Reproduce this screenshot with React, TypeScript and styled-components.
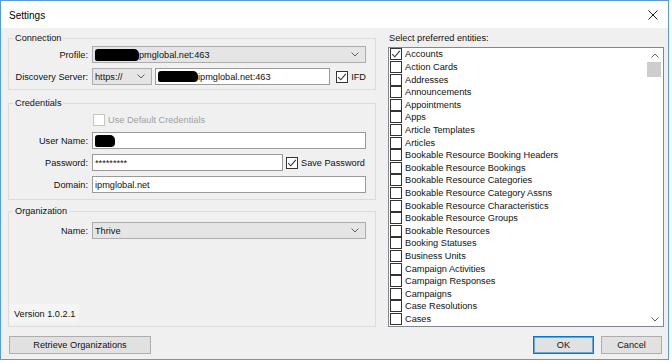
import React from "react";
import styled, { createGlobalStyle } from "styled-components";

const Global = createGlobalStyle`
  html, body { margin: 0; padding: 0; background: #ffffff; }
  body { font-family: "Liberation Sans", Arial, sans-serif; font-size: 9.2px; color: #111; }
  * { box-sizing: border-box; }
`;

const Window = styled.div`
  width: 669px;
  height: 360px;
  border: 1px solid #5b9ad8;
  display: flex;
  flex-direction: column;
  background: #f0f0f0;
`;

const TitleBar = styled.div`
  height: 27px;
  background: #ffffff;
  display: flex;
  align-items: center;
  padding: 0 0 0 8px;
  font-size: 10px;
  color: #000;
`;

const Title = styled.span`
  flex: 1;
  padding-top: 1px;
`;

const CloseBtn = styled.div`
  width: 24px;
  height: 27px;
  margin-right: 3px;
  display: flex;
  align-items: center;
  justify-content: center;
`;

const Client = styled.div`
  flex: 1;
  display: flex;
  gap: 12px;
  padding: 4px 4px 5px 7px;
  min-height: 0;
`;

const LeftCol = styled.div`
  width: 368px;
  display: flex;
  flex-direction: column;
`;

const RightCol = styled.div`
  flex: 1;
  display: flex;
  flex-direction: column;
  min-width: 0;
`;

const Group = styled.fieldset<{ $top?: number; $grow?: boolean; $pt?: number; $pb?: number }>`
  margin: ${(p) => p.$top ?? 0}px 0 0 0;
  padding: ${(p) => p.$pt ?? 2}px 9px ${(p) => p.$pb ?? 4}px 0;
  border: 1px solid #dcdcdc;
  min-width: 0;
  display: flex;
  flex-direction: column;
  gap: 5px;
  ${(p) => (p.$grow ? "flex: 1;" : "")}
`;

const Legend = styled.legend`
  margin-left: 4px;
  padding: 0 2px;
  line-height: 12px;
  height: 12px;
  font-size: 9.2px;
`;

const Row = styled.div<{ $h?: number }>`
  display: grid;
  grid-template-columns: 79px 1fr;
  column-gap: 4px;
  align-items: center;
  height: ${(p) => p.$h ?? 17}px;
`;

const Label = styled.span`
  text-align: right;
  white-space: nowrap;
`;

const Controls = styled.div`
  display: flex;
  align-items: center;
  min-width: 0;
  height: 100%;
`;

const Combo = styled.div<{ $w?: number }>`
  ${(p) => (p.$w ? `width: ${p.$w}px;` : "flex: 1;")}
  height: 17px;
  background: #e5e5e5;
  border: 1px solid #adadad;
  display: flex;
  align-items: center;
  padding: 0 6px 0 2px;
  white-space: nowrap;
`;

const ComboText = styled.span`
  flex: 1;
  display: flex;
  align-items: center;
`;

const TextBox = styled.div<{ $w?: number }>`
  ${(p) => (p.$w ? `width: ${p.$w}px;` : "flex: 1;")}
  height: 17px;
  background: #ffffff;
  border: 1px solid #9a9a9a;
  display: flex;
  align-items: center;
  padding: 0 2px;
  white-space: nowrap;
  min-width: 0;
`;

const Redact = styled.span<{ $w: number; $h?: number }>`
  display: inline-block;
  width: ${(p) => p.$w}px;
  height: ${(p) => p.$h ?? 11}px;
  background: #000;
  border-radius: 3px 5px 4px 2px;
`;

const CheckWrap = styled.label<{ $ml?: number; $disabled?: boolean }>`
  display: flex;
  align-items: center;
  gap: 3px;
  margin-left: ${(p) => p.$ml ?? 0}px;
  color: ${(p) => (p.$disabled ? "#a0a0a0" : "#111")};
  white-space: nowrap;
`;

const Box = styled.span<{ $disabled?: boolean }>`
  width: 12px;
  height: 12px;
  flex: none;
  border: 1px solid ${(p) => (p.$disabled ? "#c8c8c8" : "#333333")};
  background: #ffffff;
  display: flex;
  align-items: center;
  justify-content: center;
`;

const Version = styled.div`
  margin-top: auto;
  margin-left: 1px;
  margin-bottom: -1px;
  padding: 4px 4px 3px 4px;
  align-self: flex-start;
  background: #f5f5f5;
  line-height: 12px;
`;

const Button = styled.div<{ $w: number; $default?: boolean }>`
  width: ${(p) => p.$w}px;
  height: 18px;
  background: #e1e1e1;
  border: 1px solid ${(p) => (p.$default ? "#0078d7" : "#adadad")};
  ${(p) => (p.$default ? "box-shadow: inset 0 0 0 1px rgba(0,120,215,0.55);" : "")}
  display: flex;
  align-items: center;
  justify-content: center;
  flex: none;
`;

const LeftButtonRow = styled.div`
  margin-top: 9px;
  padding-left: 1px;
  display: flex;
`;

const ListLabel = styled.div`
  line-height: 12px;
  height: 12px;
  padding-left: 1px;
`;

const ListBox = styled.div`
  margin-top: 3px;
  flex: 1;
  border: 1px solid #828790;
  background: #ffffff;
  display: flex;
  min-height: 0;
`;

const Items = styled.div`
  flex: 1;
  padding-left: 1px;
  overflow: hidden;
`;

const Item = styled.div`
  height: 12.62px;
  display: flex;
  align-items: center;
  gap: 3px;
  white-space: nowrap;
`;

const ScrollBar = styled.div`
  width: 17px;
  display: flex;
  flex-direction: column;
  align-items: center;
  background: #ffffff;
`;

const ScrollArrow = styled.div`
  height: 14px;
  width: 100%;
  display: flex;
  align-items: center;
  justify-content: center;
`;

const Track = styled.div`
  flex: 1;
  width: 100%;
  padding: 0 2px 0 1px;
`;

const Thumb = styled.div`
  height: 15px;
  background: #cdcdcd;
`;

const ButtonRow = styled.div`
  margin-top: 9px;
  display: flex;
  justify-content: flex-end;
  gap: 7px;
  padding-right: 2px;
`;

const Check = () => (
  <svg width="10" height="10" viewBox="0 0 10 10">
    <path d="M1.2 5.2 L3.8 7.8 L8.8 1.8" fill="none" stroke="#333" strokeWidth="1.1" />
  </svg>
);

const Chevron = ({ up }: { up?: boolean }) => (
  <svg width="8" height="5" viewBox="0 0 8 5">
    <path d={up ? "M0.5 4.5 L4 1 L7.5 4.5" : "M0.5 0.5 L4 4 L7.5 0.5"} fill="none" stroke="#606060" strokeWidth="1" />
  </svg>
);

const CheckBox = ({ checked, disabled }: { checked?: boolean; disabled?: boolean }) => (
  <Box $disabled={disabled}>{checked ? <Check /> : null}</Box>
);

const entities = [
  "Accounts",
  "Action Cards",
  "Addresses",
  "Announcements",
  "Appointments",
  "Apps",
  "Article Templates",
  "Articles",
  "Bookable Resource Booking Headers",
  "Bookable Resource Bookings",
  "Bookable Resource Categories",
  "Bookable Resource Category Assns",
  "Bookable Resource Characteristics",
  "Bookable Resource Groups",
  "Bookable Resources",
  "Booking Statuses",
  "Business Units",
  "Campaign Activities",
  "Campaign Responses",
  "Campaigns",
  "Case Resolutions",
  "Cases",
];

export default function App() {
  return (
    <>
      <Global />
      <Window>
        <TitleBar>
          <Title>Settings</Title>
          <CloseBtn>
            <svg width="10" height="10" viewBox="0 0 10 10">
              <path d="M0.5 0.5 L9.5 9.5 M9.5 0.5 L0.5 9.5" stroke="#222" strokeWidth="1" />
            </svg>
          </CloseBtn>
        </TitleBar>
        <Client>
          <LeftCol>
            <Group>
              <Legend>Connection</Legend>
              <Row>
                <Label>Profile:</Label>
                <Controls>
                  <Combo>
                    <ComboText>
                      <Redact $w={44} $h={12} />
                      pmglobal.net:463
                    </ComboText>
                    <Chevron />
                  </Combo>
                </Controls>
              </Row>
              <Row>
                <Label>Discovery Server:</Label>
                <Controls>
                  <Combo $w={60}>
                    <ComboText>https://</ComboText>
                    <Chevron />
                  </Combo>
                  <TextBox style={{ marginLeft: 3 }}>
                    <Redact $w={40} />
                    ipmglobal.net:463
                  </TextBox>
                  <CheckWrap $ml={6}>
                    <CheckBox checked />
                    IFD
                  </CheckWrap>
                </Controls>
              </Row>
            </Group>
            <Group $top={7} $pt={4} $pb={6}>
              <Legend>Credentials</Legend>
              <Row $h={14}>
                <span />
                <Controls>
                  <CheckWrap $ml={1} $disabled>
                    <CheckBox disabled />
                    Use Default Credentials
                  </CheckWrap>
                </Controls>
              </Row>
              <Row>
                <Label>User Name:</Label>
                <Controls>
                  <TextBox>
                    <Redact $w={20} $h={12} />
                  </TextBox>
                </Controls>
              </Row>
              <Row>
                <Label>Password:</Label>
                <Controls>
                  <TextBox $w={191}>*********</TextBox>
                  <CheckWrap $ml={3}>
                    <CheckBox checked />
                    Save Password
                  </CheckWrap>
                </Controls>
              </Row>
              <Row>
                <Label>Domain:</Label>
                <Controls>
                  <TextBox>ipmglobal.net</TextBox>
                </Controls>
              </Row>
            </Group>
            <Group $top={5} $pt={5} $pb={4} $grow>
              <Legend>Organization</Legend>
              <Row>
                <Label>Name:</Label>
                <Controls>
                  <Combo>
                    <ComboText>Thrive</ComboText>
                    <Chevron />
                  </Combo>
                </Controls>
              </Row>
              <Version>Version 1.0.2.1</Version>
            </Group>
            <LeftButtonRow>
              <Button $w={142}>Retrieve Organizations</Button>
            </LeftButtonRow>
          </LeftCol>
          <RightCol>
            <ListLabel>Select preferred entities:</ListLabel>
            <ListBox>
              <Items>
                {entities.map((e, i) => (
                  <Item key={e}>
                    <CheckBox checked={i === 0} />
                    {e}
                  </Item>
                ))}
              </Items>
              <ScrollBar>
                <ScrollArrow>
                  <Chevron up />
                </ScrollArrow>
                <Track>
                  <Thumb />
                </Track>
                <ScrollArrow>
                  <Chevron />
                </ScrollArrow>
              </ScrollBar>
            </ListBox>
            <ButtonRow>
              <Button $w={61} $default>
                OK
              </Button>
              <Button $w={61}>Cancel</Button>
            </ButtonRow>
          </RightCol>
        </Client>
      </Window>
    </>
  );
}
